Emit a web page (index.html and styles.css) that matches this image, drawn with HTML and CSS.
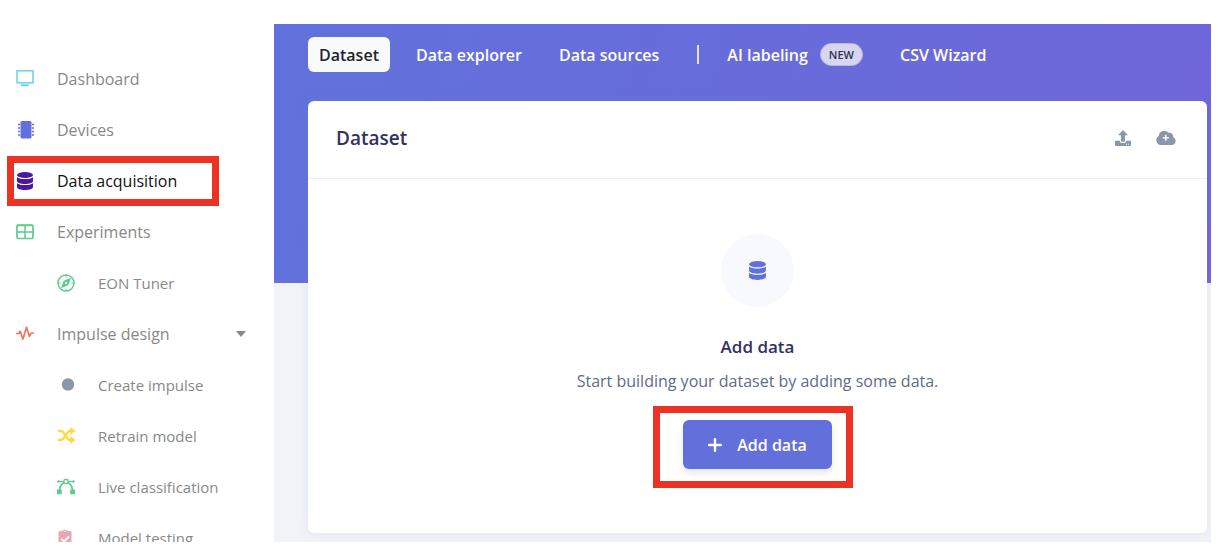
FILE: index.html
```html
<!DOCTYPE html>
<html lang="en">
<head>
<meta charset="utf-8">
<title>Data acquisition</title>
<link rel="stylesheet" href="styles.css">
</head>
<body>
<svg width="0" height="0" class="sprite" aria-hidden="true">
  <symbol id="database" viewBox="0 0 16 18">
    <ellipse cx="8" cy="3" rx="8" ry="3"/>
    <path d="M0 5.200c1.600 1.300 4.600 1.900 8 1.900s6.400-.6 8-1.900V9c0 1.700-3.600 3-8 3s-8-1.300-8-3z"/>
    <path d="M0 11.200c1.600 1.300 4.600 1.900 8 1.900s6.400-.6 8-1.900V15c0 1.700-3.600 3-8 3s-8-1.300-8-3z"/>
  </symbol>
</svg>
<div class="app">
  <nav class="sidebar" aria-label="Project">
    <ul class="menu">
      <li><a class="item" href="#">
        <svg class="icon cyan" viewBox="0 0 18 18"><rect x="1" y=".8" width="16" height="12" fill="none" stroke="currentColor" stroke-width="1.400"/><path d="M5 15.200h8" stroke="currentColor" stroke-width="1.600"/></svg>
        Dashboard</a></li>
      <li><a class="item" href="#">
        <svg class="icon indigo" viewBox="0 0 18 18"><rect x="4.500" y="0" width="11" height="17.500" rx="1.500" fill="currentColor"/><path d="M2 3.500h2M2 7h2M2 10.500h2M2 14h2M16 3.500h2M16 7h2M16 10.500h2M16 14h2" stroke="currentColor" stroke-width="1.600"/></svg>
        Devices</a></li>
      <li class="marked"><a class="item active" href="#" aria-current="page">
        <svg class="icon purple" viewBox="0 0 18 18"><use href="#database" x="1" width="16" height="18"/></svg>
        Data acquisition</a></li>
      <li><a class="item" href="#">
        <svg class="icon green" viewBox="0 0 18 18"><rect x="1" y="2" width="16" height="13.500" rx="1.200" fill="none" stroke="currentColor" stroke-width="1.700"/><path d="M9 2v13.500M1 9h16M1 2.500h16" stroke="currentColor" stroke-width="1.500"/></svg>
        Experiments</a></li>
      <li><a class="item sub" href="#">
        <svg class="icon green" viewBox="0 0 18 18"><circle cx="9" cy="9" r="8" fill="none" stroke="currentColor" stroke-width="1.500"/><path d="M9 1v2.500M9 14.500V17M1 9h2.500M14.500 9H17" stroke="currentColor"/><path fill-rule="evenodd" d="M14.200 3.800 11.200 11.200 3.800 14.200 6.800 6.800zM9 8a1 1 0 1 0 .01 0z" fill="currentColor"/></svg>
        EON Tuner</a></li>
      <li><a class="item" href="#">
        <svg class="icon red" viewBox="0 0 18 18"><path d="M0 8.500h3l1.200-2.300L7 14 10.500 2.200l3 9.300 1.700-3.500H18" fill="none" stroke="currentColor" stroke-width="1.700" stroke-linejoin="round"/></svg>
        Impulse design
        <svg class="caret" viewBox="0 0 10 6"><path d="M0 0h10L5 6z" fill="currentColor"/></svg></a></li>
      <li><a class="item sub" href="#">
        <svg class="icon slate" viewBox="0 0 18 18"><circle cx="11" cy="8.500" r="6.200" fill="currentColor"/></svg>
        Create impulse</a></li>
      <li><a class="item sub" href="#">
        <svg class="icon yellow" viewBox="0 0 18 18"><g fill="none" stroke="currentColor" stroke-width="2.400"><path d="M2 4h2c1 0 1.700.4 2.300 1.200l4.400 6.600c.6.800 1.300 1.200 2.200 1.200H15M2 13h2c1 0 1.700-.4 2.300-1.200l4.400-6.600C11.300 4.400 12 4 12.900 4H15" stroke-linecap="round"/></g><path d="M13.600.6 18 4l-4.400 3.400zM13.600 9.600 18 13l-4.400 3.400z" fill="currentColor" stroke="currentColor" stroke-width=".6" stroke-linejoin="round"/></svg>
        Retrain model</a></li>
      <li><a class="item sub" href="#">
        <svg class="icon green" viewBox="0 0 18 18"><g fill="none" stroke="currentColor"><path d="M2.500 12C2.700 8.500 4.500 6 7.200 4.500M15.500 12c-.2-3.500-2-6-4.700-7.500" stroke-width="1.800"/><path d="M1.500 3.500H7M11 3.500h5.500" stroke-width="1.200"/><rect x="7" y="1.500" width="4" height="4" rx="1" stroke-width="1.300"/></g><path d="M0 11.500h4.800v4.800H0zM13.200 11.500H18v4.800h-4.800z" fill="currentColor"/><circle cx="1.500" cy="3.500" r="1.300" fill="currentColor"/><circle cx="16.500" cy="3.500" r="1.300" fill="currentColor"/></svg>
        Live classification</a></li>
      <li><a class="item sub" href="#">
        <svg class="icon pink" viewBox="0 0 18 18"><path d="M3 2h2.500a2.800 2.800 0 0 1 5 0H13a1.500 1.500 0 0 1 1.500 1.500V16a2 2 0 0 1-2 2H3.500a2 2 0 0 1-2-2V3.500A1.500 1.500 0 0 1 3 2z" fill="currentColor"/><circle cx="8" cy="2.300" r=".8" fill="#fff"/><path d="M4.500 10 7 12.500l5-5" fill="none" stroke="#fff" stroke-width="1.900"/></svg>
        Model testing</a></li>
    </ul>
  </nav>
  <main class="main">
    <nav class="tabs" aria-label="Data acquisition">
      <a class="tab current" href="#" aria-current="page">Dataset</a>
      <a class="tab" href="#">Data explorer</a>
      <a class="tab" href="#">Data sources</a>
      <span class="divider"></span>
      <a class="tab" href="#">AI labeling <span class="badge">NEW</span></a>
      <a class="tab" href="#">CSV Wizard</a>
    </nav>
    <section class="card">
      <header class="card-header">
        <h1 class="card-title">Dataset</h1>
        <div class="actions">
          <button class="action" type="button" aria-label="Upload data">
            <svg width="16" height="16" viewBox="0 0 16 16" fill="currentColor"><path d="M8 0l5 5.200H10V11q0 .8-.8.8H6.800Q6 11.800 6 11V5.200H3z"/><path fill-rule="evenodd" d="M.8 10.800h4.100V11q0 1.900 1.900 1.900h2.400q1.900 0 1.900-1.900v-.2h4.100q.8 0 .8.800v3.600q0 .8-.8.8H.8Q0 16 0 15.200v-3.600q0-.8.8-.8zM11 13.700v1h1v-1zm2.200 0v1h1v-1z"/></svg>
          </button>
          <button class="action" type="button" aria-label="Add from cloud">
            <svg width="20" height="14" viewBox="0 0 20 14"><path d="M5 14a5 5 0 0 1-2.200-9.300A5.500 5.500 0 0 1 12.500 1.800 3.600 3.600 0 0 1 17 6.100 4.100 4.100 0 0 1 15.800 14z" fill="currentColor"/><path d="M9.800 3.800v6M6.800 6.800h6" stroke="#fff" stroke-width="1.500"/></svg>
          </button>
        </div>
      </header>
      <div class="empty">
        <div class="circle"><svg width="17" height="19" viewBox="0 0 16 18" fill="currentColor"><use href="#database" width="16" height="18"/></svg></div>
        <h2 class="empty-title">Add data</h2>
        <p class="empty-text">Start building your dataset by adding some data.</p>
        <div class="cta marked">
          <button class="primary" type="button"><svg width="14" height="14" viewBox="0 0 14 14"><path d="M7 1.200v11.600M1.200 7h11.600" stroke="currentColor" stroke-width="2.400" stroke-linecap="round"/></svg>Add data</button>
        </div>
      </div>
    </section>
  </main>
</div>
</body>
</html>
```
FILE: styles.css
```css
* { box-sizing: border-box; }
body {
  margin: 0;
  background: #fff;
  font-family: "Open Sans", "Noto Sans", sans-serif;
  font-size: 16px;
  line-height: 24px;
}
a { color: inherit; text-decoration: none; }
button { font: inherit; border: 0; padding: 0; cursor: pointer; }
svg { flex: none; display: block; }
.sprite { position: absolute; }

.app {
  display: flex;
  height: 100vh;
  padding: 24px 15px 18px 0;
}
.sidebar {
  flex: none;
  width: 274px;
  padding-top: 29px;
  overflow: hidden;
}
.menu { list-style: none; margin: 0; padding: 0; }
.item {
  display: flex;
  align-items: center;
  gap: 23px;
  height: 51px;
  padding: 0 28px 0 16px;
  color: #888;
}
.item.sub { padding-left: 57px; font-size: 15px; }
.item.active { color: #111; }
.icon { width: 18px; height: 18px; }
.caret { width: 10px; height: 6px; margin-left: auto; }
.cyan { color: #5dcdea; }
.indigo { color: #6370dc; }
.purple { color: #4c16a4; fill: currentColor; }
.green { color: #5dcc8c; }
.red { color: #f0735a; }
.slate { color: #8898aa; }
.yellow { color: #fdd843; }
.pink { color: #eaa6b5; }

.marked { position: relative; }
.marked::after {
  content: "";
  position: absolute;
  inset: 1px 55px 0 7px;
  border: 7px solid #ec3323;
  pointer-events: none;
}
.cta.marked::after { inset: -14px -21px -19px -30px; }

.main {
  flex: 1;
  min-width: 0;
  padding: 13px 4px 9px 34px;
  overflow: hidden;
  background:
    linear-gradient(100deg, #6172dc, #6f66da) 0 0 / 100% 259px no-repeat,
    #f2f3f9;
}
.tabs {
  display: flex;
  align-items: center;
  gap: 15px;
  height: 35px;
  margin-bottom: 29px;
  color: #fff;
  font-weight: 600;
}
.tab {
  display: flex;
  align-items: center;
  gap: 12px;
  height: 35px;
  padding: 0 11px;
  border-radius: 6px;
  white-space: nowrap;
}
.tab.current { background: #f9fafc; color: #212529; }
.divider { width: 2px; height: 19px; margin: 0 2px 0 12px; background: #e4e3f8; }
.badge {
  padding: 0 8px;
  border: 1px solid #b9b7e6;
  border-radius: 12px;
  background: #d8d6ef;
  color: #2b3050;
  font-size: 11px;
  line-height: 21px;
}
.card {
  border-radius: 6px;
  background: #fff;
  box-shadow: 0 0 12px rgba(136, 152, 170, 0.15);
}
.card-header {
  display: flex;
  align-items: center;
  justify-content: space-between;
  height: 78px;
  padding: 0 31px 3px 28px;
  border-bottom: 1px solid #eff0f3;
}
.card-title { margin: 0; color: #32325d; font-size: 19px; font-weight: 600; }
.actions { display: flex; gap: 25px; }
.action { background: none; color: #8898aa; }
.empty {
  display: flex;
  flex-direction: column;
  align-items: center;
  padding: 55px 20px 64px;
}
.circle {
  display: flex;
  align-items: center;
  justify-content: center;
  width: 73px;
  height: 73px;
  border-radius: 50%;
  background: #f8f9fe;
  color: #6370dc;
}
.empty-title { margin: 28px 0 10px; color: #32325d; font-size: 17px; font-weight: 600; line-height: 24px; }
.empty-text { margin: 0 0 27px; color: #5f6b88; }
.primary {
  display: flex;
  align-items: center;
  gap: 15px;
  height: 49px;
  padding: 0 25px;
  border-radius: 6px;
  background: #6370dc;
  box-shadow: 0 4px 6px rgba(50, 50, 93, 0.12);
  color: #fff;
  font-weight: 600;
}
```
